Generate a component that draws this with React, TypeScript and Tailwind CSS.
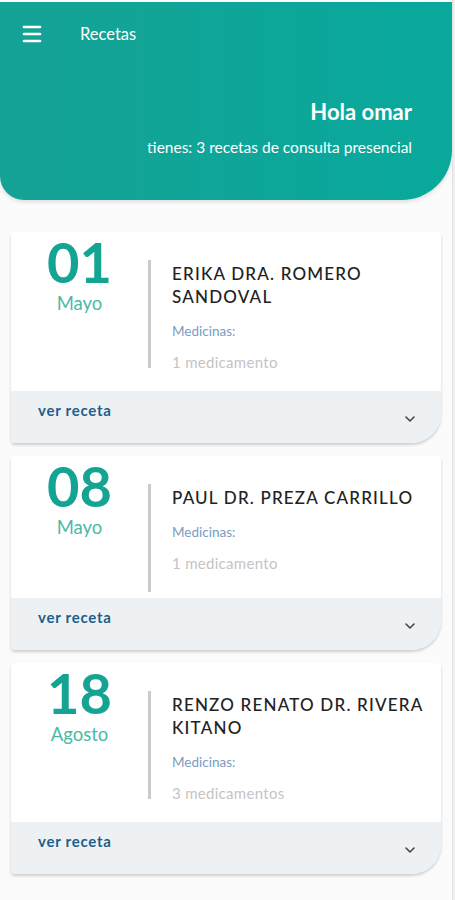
import { ChevronDown, Menu } from "lucide-react";

type Receta = {
  day: string;
  month: string;
  doctor: string[];
  meds: string;
};

const recetas: Receta[] = [
  { day: "01", month: "Mayo", doctor: ["ERIKA DRA. ROMERO", "SANDOVAL"], meds: "1 medicamento" },
  { day: "08", month: "Mayo", doctor: ["PAUL DR. PREZA CARRILLO"], meds: "1 medicamento" },
  { day: "18", month: "Agosto", doctor: ["RENZO RENATO DR. RIVERA", "KITANO"], meds: "3 medicamentos" },
];

function RecetaCard({ day, month, doctor, meds }: Receta) {
  return (
    <div className="bg-white rounded-t-[4px] rounded-bl-[4px] rounded-br-[30px] shadow-[0_2px_3px_rgba(0,0,0,0.18)] overflow-hidden">
      <div className="flex items-start">
        <div className="w-[137px] shrink-0 flex flex-col items-center pt-[1px]">
          <span className="text-[56px] leading-[58px] text-[#15a393] font-bold">{day}</span>
          <span className="mt-[2px] text-[18.5px] leading-[20px] text-[#4bbaa5]">{month}</span>
        </div>
        <div className="w-[3px] h-[108px] mt-[28px] mb-[6px] bg-[#cbcbcb] shrink-0" />
        <div className="ml-[21px] pt-[30px] pb-[19px] flex flex-col">
          {doctor.map((line) => (
            <span key={line} className="text-[17px] leading-[23px] tracking-[0.07em] font-medium text-[#222]">
              {line}
            </span>
          ))}
          <span className="mt-[13px] text-[13.5px] leading-[20px] text-[#7b9cbf]">Medicinas:</span>
          <span className="mt-[11px] text-[15px] leading-[20px] tracking-[0.02em] text-[#c4c4c4]">{meds}</span>
        </div>
      </div>
      <div className="h-[52px] bg-[#edf1f4] flex items-start justify-between pl-[27px] pr-[23px]">
        <span className="mt-[10px] text-[15px] leading-[18px] tracking-[0.05em] font-bold text-[#1e5e8a]">ver receta</span>
        <ChevronDown size={16} strokeWidth={2.4} className="mt-[20px] text-[#444]" />
      </div>
    </div>
  );
}

export default function App() {
  return (
    <div className="w-[455px] h-[900px] bg-[#fbfbfb] font-['Lato','Noto_Sans',sans-serif] flex overflow-hidden">
      <div className="w-[452px] flex flex-col">
        <header className="h-[198px] mt-[2px] bg-gradient-to-r from-[#14a295] to-[#08a99c] rounded-bl-[24px] rounded-br-[50px] shadow-[0_2px_4px_rgba(0,0,0,0.12)] px-[20px] pt-[20px] text-white">
          <div className="flex items-center h-[24px]">
            <Menu size={24} strokeWidth={2.6} />
            <span className="ml-[36px] text-[16.5px]">Recetas</span>
          </div>
          <div className="mt-[52px] pr-[20px] flex flex-col items-end">
            <span className="text-[22px] leading-[28px] font-bold">Hola omar</span>
            <span className="mt-[12px] text-[15.5px] leading-[18px]">tienes: 3 recetas de consulta presencial</span>
          </div>
        </header>
        <div className="px-[11px] pt-[32px] flex flex-col gap-[13px]">
          {recetas.map((r) => (
            <RecetaCard key={r.day} {...r} />
          ))}
        </div>
      </div>
      <div className="w-[3px] bg-[#eeeeee] border-l border-[#e2e2e2]" />
    </div>
  );
}
